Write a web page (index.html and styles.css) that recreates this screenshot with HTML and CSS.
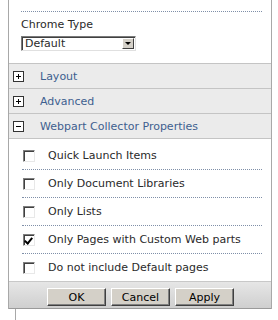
FILE: index.html
```html
<!DOCTYPE html>
<html>
<head>
    <title>Webpart Properties</title>
    <link rel="stylesheet" href="styles.css">
</head>
<body>
    <div class="panel">
        <div class="top">
            <div class="dots"></div>
            <div class="field-label">Chrome Type</div>
            <div class="select">
                <span class="select-text">Default</span>
                <span class="select-btn"><span class="arrow"></span></span>
            </div>
        </div>

        <div class="section">
            <svg class="toggle" width="11" height="11" viewBox="0 0 11 11"><rect x="0.5" y="0.5" width="10" height="10" fill="#fff" stroke="#333"/><path d="M3 5.5h5M5.5 3v5" stroke="#000" stroke-width="1"/></svg>
            <span class="section-title">Layout</span>
        </div>
        <div class="section">
            <svg class="toggle" width="11" height="11" viewBox="0 0 11 11"><rect x="0.5" y="0.5" width="10" height="10" fill="#fff" stroke="#333"/><path d="M3 5.5h5M5.5 3v5" stroke="#000" stroke-width="1"/></svg>
            <span class="section-title">Advanced</span>
        </div>
        <div class="section">
            <svg class="toggle" width="11" height="11" viewBox="0 0 11 11"><rect x="0.5" y="0.5" width="10" height="10" fill="#fff" stroke="#333"/><path d="M3 5.5h5" stroke="#000" stroke-width="1"/></svg>
            <span class="section-title">Webpart Collector Properties</span>
        </div>

        <div class="options">
            <div class="option"><span class="check"></span>Quick Launch Items</div>
            <div class="option"><span class="check"></span>Only Document Libraries</div>
            <div class="option"><span class="check"></span>Only Lists</div>
            <div class="option"><span class="check checked"></span>Only Pages with Custom Web parts</div>
            <div class="option last"><span class="check"></span>Do not include Default pages</div>
        </div>

        <div class="button-bar">
            <button class="btn">OK</button>
            <button class="btn">Cancel</button>
            <button class="btn">Apply</button>
        </div>
    </div>
    <div class="below"></div>
</body>
</html>
```

FILE: styles.css
```css
body {
    margin: 0;
    background: #fff;
    font-family: "DejaVu Sans", Verdana, sans-serif;
    font-size: 11px;
    color: #2a2a2a;
}

.panel {
    margin-left: 8px;
    width: 262px;
    border-left: 1px solid #a8a8a8;
    border-right: 1px solid #a8a8a8;
}

.top {
    height: 63px;
    padding: 0 9px 0 12px;
    box-sizing: border-box;
    overflow: hidden;
}

.dots {
    margin-top: 11px;
    border-top: 1px dotted #7f8fa8;
}

.field-label {
    margin-top: 6px;
    line-height: 13px;
}

.select {
    display: flex;
    margin-top: 5px;
    width: 115px;
    height: 15px;
    box-sizing: border-box;
    border-top: 1px solid #7a7a7a;
    border-left: 1px solid #7a7a7a;
    border-right: 1px solid #e0e0e0;
    border-bottom: 1px solid #e0e0e0;
    box-shadow: inset 1px 1px 0 #404040;
    background: #fff;
}

.select-text {
    flex: 1;
    padding-left: 3px;
    line-height: 13px;
}

.select-btn {
    width: 12px;
    margin: 1px 1px 1px 0;
    background: #d4d0c8;
    border-top: 1px solid #fff;
    border-left: 1px solid #fff;
    border-right: 1px solid #404040;
    border-bottom: 1px solid #404040;
    box-sizing: border-box;
    display: flex;
    align-items: center;
    justify-content: center;
}

.arrow {
    width: 0;
    height: 0;
    border-left: 3px solid transparent;
    border-right: 3px solid transparent;
    border-top: 3px solid #000;
}

/* collapsible section headers */
.section {
    display: flex;
    align-items: center;
    height: 24px;
    border-top: 1px solid #c4c4c4;
    background: #ebebeb;
}

.toggle {
    margin-left: 4px;
    display: block;
}

.section-title {
    margin-left: 16px;
    color: #3e5f8f;
}

.options {
    border-top: 1px solid #c4c4c4;
    padding-top: 3px;
}

.option {
    display: flex;
    align-items: center;
    height: 27px;
    margin: 0 9px 0 13px;
    border-bottom: 1px dotted #7f8fa8;
}

.option.last {
    border-bottom: none;
}

.check {
    width: 12px;
    height: 12px;
    box-sizing: border-box;
    margin: 0 13px 0 1px;
    border-top: 1px solid #808080;
    border-left: 1px solid #808080;
    border-right: 1px solid #e8e8e8;
    border-bottom: 1px solid #e8e8e8;
    box-shadow: inset 1px 1px 0 #404040;
    background: #fff;
    position: relative;
}

.check.checked::after {
    content: "";
    position: absolute;
    left: 2px;
    top: 1px;
    width: 3px;
    height: 6px;
    border-right: 2px solid #000;
    border-bottom: 2px solid #000;
    transform: rotate(40deg);
}

.button-bar {
    display: flex;
    gap: 5px;
    padding: 6px 0 0 38px;
    height: 28px;
    box-sizing: border-box;
    background: linear-gradient(#e6e6e6, #cfcfcf);
    border-top: 1px solid #c8c8c8;
    border-bottom: 1px solid #9a9a9a;
}

.btn {
    width: 59px;
    height: 18px;
    padding: 0;
    font-family: "DejaVu Sans", Verdana, sans-serif;
    font-size: 11px;
    color: #000;
    background: #d4d0c8;
    border-top: 1px solid #fff;
    border-left: 1px solid #fff;
    border-right: 1px solid #404040;
    border-bottom: 1px solid #404040;
    box-shadow: inset -1px -1px 0 #808080;
}

.below {
    margin-left: 15px;
    height: 20px;
    border-left: 1px solid #a8a8a8;
}
```
